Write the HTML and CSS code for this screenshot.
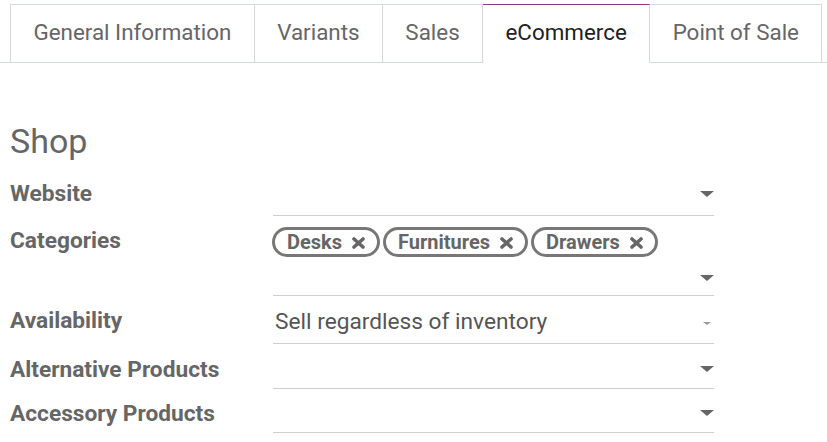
FILE: index.html
```html
<!DOCTYPE html>
<html>
<head>
<meta charset="utf-8">
<link rel="stylesheet" href="styles.css">
</head>
<body>
<ul class="tabs">
  <li class="tab">General Information</li>
  <li class="tab">Variants</li>
  <li class="tab">Sales</li>
  <li class="tab active">eCommerce</li>
  <li class="tab">Point of Sale</li>
</ul>
<div class="content">
  <h2 class="title">Shop</h2>
  <div class="row r1">
    <div class="label">Website</div>
    <div class="field"><span class="val"></span><span class="caret"></span></div>
  </div>
  <div class="row r2">
    <div class="label">Categories</div>
    <div class="field multi">
      <div class="tags">
        <span class="tag">Desks<svg class="x" viewBox="0 0 13 12"><path d="M2 2 L11 10 M11 2 L2 10" /></svg></span>
        <span class="tag">Furnitures<svg class="x" viewBox="0 0 13 12"><path d="M2 2 L11 10 M11 2 L2 10" /></svg></span>
        <span class="tag">Drawers<svg class="x" viewBox="0 0 13 12"><path d="M2 2 L11 10 M11 2 L2 10" /></svg></span>
      </div>
      <div class="line2"><span class="caret"></span></div>
    </div>
  </div>
  <div class="row r3">
    <div class="label">Availability</div>
    <div class="field"><span class="val">Sell regardless of inventory</span><span class="caret small"></span></div>
  </div>
  <div class="row r4">
    <div class="label">Alternative Products</div>
    <div class="field"><span class="val"></span><span class="caret"></span></div>
  </div>
  <div class="row r5">
    <div class="label">Accessory Products</div>
    <div class="field"><span class="val"></span><span class="caret"></span></div>
  </div>
</div>
</body>
</html>
```
FILE: styles.css
```css
html, body {
  margin: 0;
  padding: 0;
  background: #fff;
  font-family: Roboto, "Liberation Sans", sans-serif;
  color: #666;
}
.tabs {
  list-style: none;
  margin: 4px 0 0 0;
  padding: 0 0 0 10px;
  display: flex;
  border-bottom: 1px solid #d3d9df;
  white-space: nowrap;
}
.tab {
  box-sizing: border-box;
  height: 59px;
  margin-bottom: -1px;
  padding: 0 22.4px;
  border: 1px solid #d3d9df;
  border-left: none;
  border-bottom: 1px solid #d3d9df;
  font-size: 22.4px;
  line-height: 55px;
  color: #666;
}
.tab:first-child {
  border-left: 1px solid #d3d9df;
}
.tab.active {
  border-top: 1px solid #8e3a82;
  border-bottom-color: #fff;
  color: #222;
}
.content {
  padding: 0 0 0 10px;
}
.title {
  margin: 58px 0 19px 0;
  font-size: 34px;
  line-height: 40px;
  font-weight: 400;
  color: #666;
}
.row {
  display: grid;
  grid-template-columns: 263px 441px;
  align-items: start;
}
.label {
  font-size: 22.7px;
  font-weight: 700;
  line-height: 26px;
  color: #666;
  white-space: nowrap;
}
.field {
  box-sizing: border-box;
  border-bottom: 1px solid #cfcfcf;
  display: flex;
  justify-content: space-between;
  align-items: flex-start;
}
.val {
  font-size: 22.7px;
  line-height: 26px;
  color: #555;
  padding-left: 2px;
}
.caret {
  width: 0;
  height: 0;
  border-left: 7px solid transparent;
  border-right: 7px solid transparent;
  border-top: 6px solid #666;
}
.caret.small {
  border-left-width: 4px;
  border-right-width: 4px;
  border-top: 3px solid #999;
  margin-right: 3px;
}
.r1 .label { padding-top: 1px; }
.r1 .field { height: 36px; padding-top: 11px; }
.r2 .label { padding-top: 12px; }
.r2 .field { height: 80px; padding-top: 11px; flex-direction: column; justify-content: flex-start; align-items: stretch; }
.r3 .label { padding-top: 12px; }
.r3 .field { height: 48px; padding-top: 13px; }
.r3 .caret { margin-top: 13px; }
.r4 .label { padding-top: 13px; }
.r4 .field { height: 45px; padding-top: 22px; }
.r5 .label { padding-top: 12px; }
.r5 .field { height: 44px; padding-top: 21px; }
.tags {
  display: flex;
  gap: 3px;
  margin-left: -1px;
}
.tag {
  box-sizing: border-box;
  height: 30px;
  display: inline-flex;
  align-items: center;
  padding: 0 12px;
  border: 3px solid #777;
  border-radius: 15px;
  font-size: 20px;
  font-weight: 700;
  color: #666;
}
.x {
  width: 13px;
  height: 12px;
  margin-left: 10px;
  margin-top: 2px;
  stroke: #666;
  stroke-width: 3.6;
  stroke-linecap: round;
  fill: none;
}
.line2 {
  display: flex;
  justify-content: flex-end;
  margin-top: 18px;
}
```
